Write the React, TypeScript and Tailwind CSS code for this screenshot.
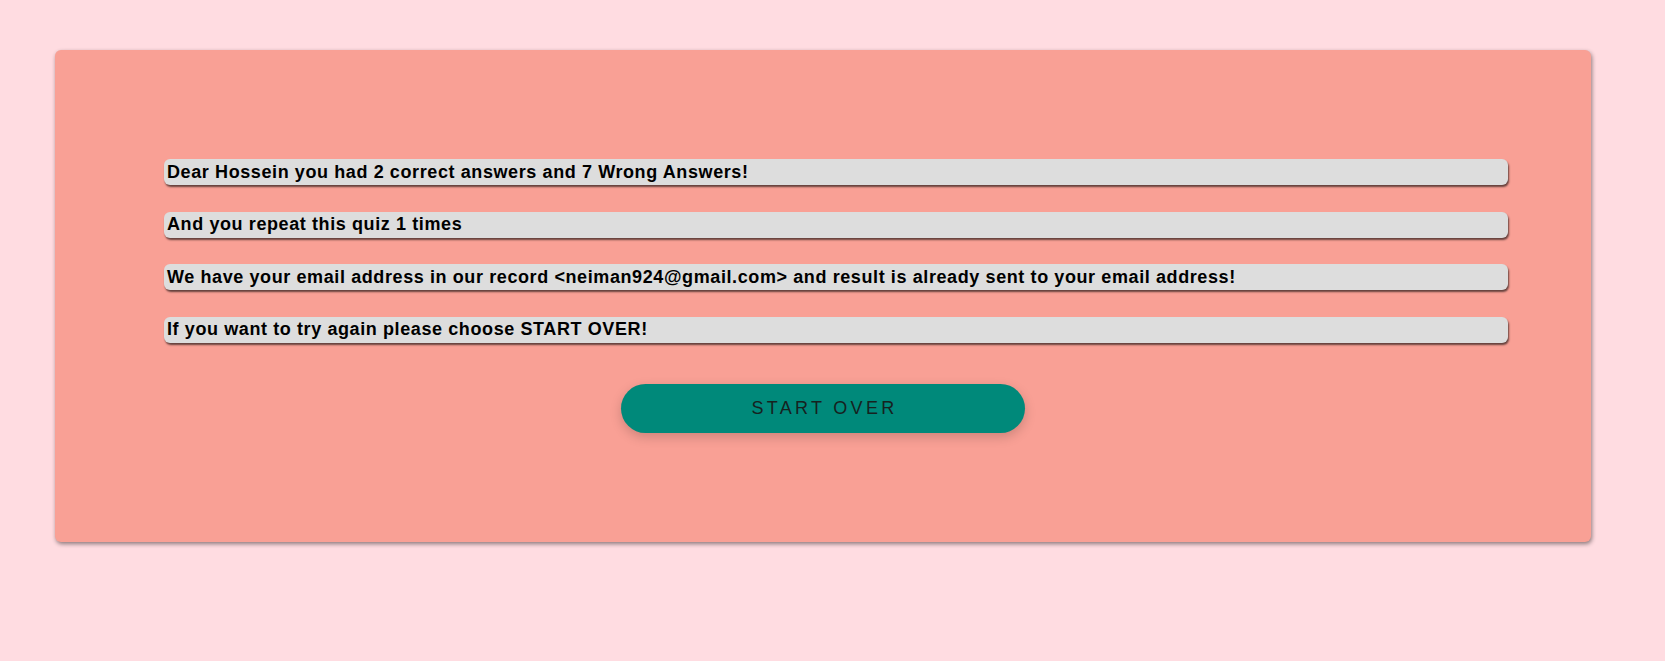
import React from "react";

const rows: React.ReactNode[] = [
  "Dear Hossein you had 2 correct answers and 7 Wrong Answers!",
  "And you repeat this quiz 1 times",
  "We have your email address in our record <neiman924@gmail.com> and result is already sent to your email address!",
  <>
    If you want to try again please choose <b>START OVER</b>!
  </>,
];

export default function App() {
  return (
    <div
      className="min-h-screen w-full bg-[#ffdce1] pt-[50px] pb-[119px]"
      style={{ fontFamily: '"Liberation Sans", Arial, sans-serif' }}
    >
      <div className="ml-[55px] w-[1536px] h-[492px] rounded-[6px] bg-[#f9a095] shadow-[1px_2px_4px_rgba(0,0,0,0.45)] pt-[109px] flex flex-col">
        <div className="pl-[109px] pr-[83px] flex flex-col gap-[26.5px]">
          {rows.map((r, i) => (
            <div
              key={i}
              className="h-[26px] flex items-center rounded-[6px] bg-[#dddddd] shadow-[1px_2px_2px_rgba(0,0,0,0.6)] pl-[3px] text-[18px] tracking-[0.6px] leading-[21px] font-bold text-black whitespace-nowrap"
            >
              <span>{r}</span>
            </div>
          ))}
        </div>
        <div className="flex justify-center mt-[41px]">
          <button className="w-[404px] h-[49px] rounded-full bg-[#00897a] shadow-[0_4px_12px_rgba(0,0,0,0.18)] text-[18px] tracking-[3.3px] text-[#16221f] pl-[3px]">
            START OVER
          </button>
        </div>
      </div>
    </div>
  );
}
